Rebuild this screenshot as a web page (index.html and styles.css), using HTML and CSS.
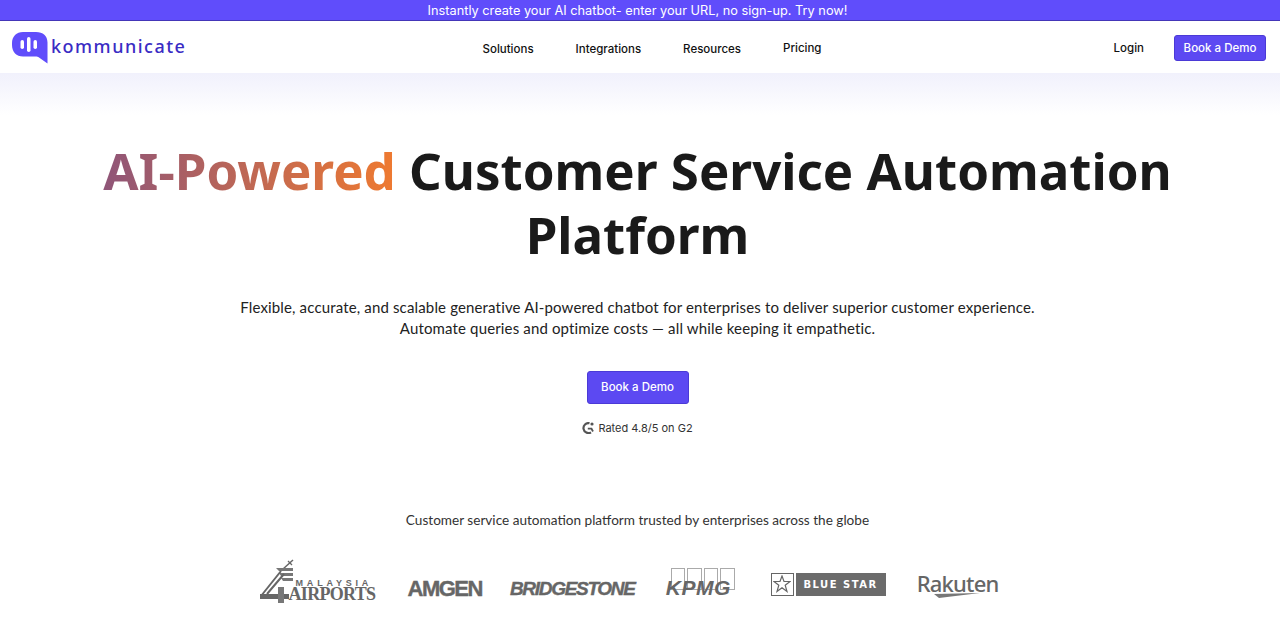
FILE: index.html
```html
<!DOCTYPE html>
<html lang="en">
<head>
  <meta charset="UTF-8">
  <meta name="viewport" content="width=device-width, initial-scale=1.0">
  <title>Kommunicate</title>
  <link rel="stylesheet" href="styles.css">
</head>
<body>
  <div class="promo">Instantly create your AI chatbot- enter your URL, no sign-up. Try now!</div>

  <header class="nav">
    <a class="brand" href="#">
      <svg class="brand-icon" width="36" height="32" viewBox="0 0 36 32">
        <path d="M11 0H24C31 0 35.500 4 35.500 10.500V31.500L27 25.500C26 24.800 25 24.500 23.500 24.500H11C4.500 24.500 0 20 0 13V11C0 4.500 4.500 0 11 0Z" fill="#604dfb"/>
        <rect x="8.500" y="8" width="3.500" height="9" rx="1.750" fill="#fff"/>
        <rect x="15" y="5" width="3.500" height="15" rx="1.750" fill="#fff"/>
        <rect x="21.500" y="8" width="3.500" height="9" rx="1.750" fill="#fff"/>
      </svg>
      <span class="brand-name">kommunicate</span>
    </a>
    <nav class="nav-links">
      <a href="#">Solutions</a>
      <a href="#">Integrations</a>
      <a href="#">Resources</a>
      <a class="nav-pricing" href="#">Pricing</a>
    </nav>
    <div class="nav-actions">
      <a class="login" href="#">Login</a>
      <a class="btn btn-small" href="#">Book a Demo</a>
    </div>
  </header>

  <main class="hero">
    <h1><span class="gradient-text">AI-Powered</span> Customer Service Automation Platform</h1>
    <p class="lead">Flexible, accurate, and scalable generative AI-powered chatbot for enterprises to deliver superior customer experience.<br>Automate queries and optimize costs — all while keeping it empathetic.</p>
    <a class="btn btn-large" href="#">Book a Demo</a>
    <div class="rating">
      <svg width="12" height="12" viewBox="0 0 12 12">
        <path d="M9 10.400A5 5 0 1 1 7.500 1.200" fill="none" stroke="#555" stroke-width="2.200"/>
        <path d="M5.800 6.700H9.500L11 9.500" fill="none" stroke="#555" stroke-width="1.800"/>
        <circle cx="10" cy="2" r="1.600" fill="#555"/>
      </svg>
      <span>Rated 4.8/5 on G2</span>
    </div>

    <section class="trusted">
      <p>Customer service automation platform trusted by enterprises across the globe</p>
      <div class="logos">
        <div class="logo-malaysia">
          <svg width="38" height="44" viewBox="0 0 38 44">
            <path d="M24 10 34 1" stroke="#666" stroke-width="1.500" fill="none"/>
            <path d="M29 2 33 6" stroke="#666" stroke-width="1.200" fill="none"/>
            <path d="M17 9H34V12H20ZM20 14H34V17H22ZM22 19H34V22H24Z" fill="#777"/>
            <path d="M22 12 2 37M25 15 8 35" stroke="#666" stroke-width="2" fill="none"/>
            <path d="M1 35H30V40H1Z" fill="#666"/>
            <path d="M19 28H25V44H19Z" fill="#777"/>
          </svg>
          <div class="malaysia-text">
            <span class="malaysia-top">MALAYSIA</span>
            <span class="malaysia-bottom">AIRPORTS</span>
          </div>
        </div>
        <span class="logo-amgen">AMGEN</span>
        <span class="logo-bridgestone">BRIDGESTONE</span>
        <div class="logo-kpmg">
          <div class="kpmg-boxes"><i></i><i></i><i></i><i></i></div>
          <span>KPMG</span>
        </div>
        <div class="logo-bluestar">
          <div class="star-box">
            <svg width="18" height="18" viewBox="0 0 18 18">
              <path d="M9 1 11 6.500H17L12.200 10.200 14 16.500 9 12.800 4 16.500 5.800 10.200 1 6.500H7Z" fill="none" stroke="#666" stroke-width="1.200"/>
            </svg>
          </div>
          <span>BLUE STAR</span>
        </div>
        <div class="logo-rakuten">
          <span>Rakuten</span>
          <svg width="46" height="5" viewBox="0 0 46 5">
            <path d="M0 1 46 0 5 5Z" fill="#777"/>
          </svg>
        </div>
      </div>
    </section>
  </main>
</body>
</html>
```

FILE: styles.css
```css
* {
  box-sizing: border-box;
}

body {
  margin: 0;
  height: 622px;
  overflow: hidden;
  background: #fff;
  color: #1a1a1a;
  font-family: Lato, "Noto Sans", sans-serif;
}

a {
  color: inherit;
  text-decoration: none;
}

.promo {
  height: 21px;
  background: #604dfb;
  border-bottom: 1px solid #4436b8;
  color: #fff;
  font-family: Inter, sans-serif;
  font-size: 12.75px;
  line-height: 21px;
  text-align: center;
  padding-right: 5px;
}

.nav {
  display: grid;
  grid-template-columns: 1fr auto 1fr;
  height: 52px;
  padding: 0 14px 0 12px;
  font-family: Inter, sans-serif;
  font-size: 11.5px;
  font-weight: 500;
  color: #111;
}

.brand {
  display: flex;
  align-items: flex-start;
  gap: 3px;
  height: 32px;
  margin-top: 11px;
}

.brand-name {
  font-family: "Noto Sans", sans-serif;
  font-size: 18px;
  font-weight: 500;
  letter-spacing: 1.5px;
  line-height: 24px;
  padding-top: 2px;
  color: #3a2cc4;
}

.nav-links {
  display: flex;
  align-items: center;
  gap: 42px;
  margin-left: 26px;
  padding-top: 4px;
}

.nav-pricing {
  margin-top: -2px;
}

.nav-actions {
  display: flex;
  justify-content: flex-end;
  align-items: center;
  gap: 30px;
  padding-top: 2px;
}

.btn {
  display: inline-block;
  background: #5c49f2;
  border: 1px solid #4b3ad6;
  border-radius: 3px;
  color: #fff;
  font-family: Inter, sans-serif;
  font-size: 11.5px;
  font-weight: 500;
  text-align: center;
}

.btn-small {
  width: 92px;
  height: 26px;
  line-height: 24px;
}

.btn-large {
  width: 102px;
  height: 33px;
  line-height: 31px;
  margin-top: 33px;
}

.hero {
  height: 549px;
  padding: 65px 5px 0 0;
  text-align: center;
  background: linear-gradient(#f1f1fc 0, #fff 42px);
}

h1 {
  width: 1100px;
  margin: 0 auto;
  font-family: "Noto Sans", sans-serif;
  font-size: 51px;
  font-weight: 700;
  line-height: 64px;
  color: #1a1a1a;
}

.gradient-text {
  background: linear-gradient(90deg, #8f5578, #ef7a30);
  -webkit-background-clip: text;
  background-clip: text;
  color: transparent;
}

.lead {
  margin: 31px 0 0;
  font-size: 15px;
  letter-spacing: 0.15px;
  line-height: 20.5px;
  color: #222;
}

.rating {
  display: flex;
  justify-content: center;
  align-items: center;
  gap: 4px;
  margin-top: 17px;
  font-family: Inter, sans-serif;
  font-size: 11px;
  color: #333;
}

.trusted {
  margin-top: 76px;
}

.trusted p {
  margin: 0;
  font-size: 13.6px;
  line-height: 18px;
  color: #333;
}

.logos {
  display: flex;
  justify-content: center;
  align-items: center;
  gap: 31px;
  height: 48px;
  margin: 28px 0 0 -18px;
  color: #666;
}

.logo-malaysia {
  display: flex;
  align-items: flex-end;
  width: 117px;
  font-weight: 700;
  line-height: 1;
}

.malaysia-text {
  display: flex;
  flex-direction: column;
  margin-left: -8px;
  padding-bottom: 3px;
  text-align: left;
}

.malaysia-top {
  font-family: "Liberation Sans", sans-serif;
  font-size: 9px;
  line-height: 9px;
  letter-spacing: 3.8px;
  padding-left: 7px;
}

.malaysia-bottom {
  font-family: "Liberation Serif", serif;
  font-size: 18px;
  line-height: 12px;
  letter-spacing: -0.7px;
}

.logo-amgen {
  margin: 16px 0 0 1px;
  font-family: "Liberation Sans", sans-serif;
  font-size: 22px;
  font-weight: 700;
  letter-spacing: -1.5px;
  -webkit-text-stroke: 0.4px #666;
}

.logo-bridgestone {
  margin: 16px 0 0 -3px;
  font-family: "Liberation Sans", sans-serif;
  font-size: 19px;
  font-style: italic;
  font-weight: 700;
  letter-spacing: -1.3px;
  -webkit-text-stroke: 0.4px #666;
}

.logo-kpmg {
  display: flex;
  flex-direction: column;
  align-items: flex-start;
  margin-top: 4px;
}

.kpmg-boxes {
  display: flex;
  gap: 2px;
  height: 22px;
  margin-left: 5px;
}

.kpmg-boxes i {
  width: 14.5px;
  border: 1px solid #aaa;
}

.logo-kpmg span {
  margin-top: -12px;
  font-family: "Liberation Sans", sans-serif;
  font-size: 21px;
  font-style: italic;
  font-weight: 700;
  line-height: 20px;
  letter-spacing: 0.6px;
}

.logo-bluestar {
  display: flex;
  gap: 2px;
  height: 23px;
  margin: 6px 0 0 5px;
}

.star-box {
  display: flex;
  align-items: center;
  justify-content: center;
  width: 23px;
  border: 1px solid #666;
}

.logo-bluestar span {
  width: 90px;
  background: #6b6b6b;
  color: #fff;
  font-family: "DejaVu Sans", sans-serif;
  font-size: 10px;
  font-weight: 700;
  letter-spacing: 1.5px;
  line-height: 23px;
}

.logo-rakuten {
  position: relative;
  margin-top: 4px;
  font-family: "Noto Sans", sans-serif;
  font-size: 22px;
  font-weight: 500;
  letter-spacing: -0.8px;
  line-height: 24px;
}

.logo-rakuten svg {
  position: absolute;
  left: 17px;
  bottom: -3px;
}
```
